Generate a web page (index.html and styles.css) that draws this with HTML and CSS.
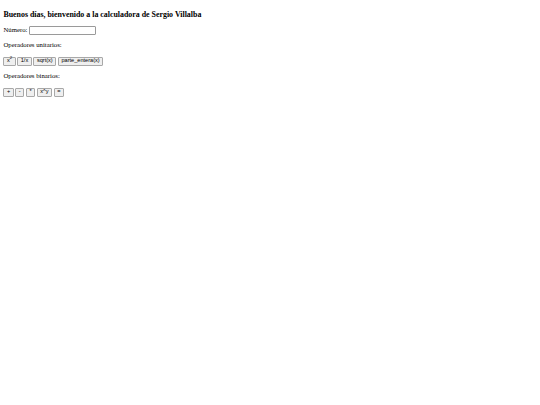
FILE: index.html
```html
<!DOCTYPE html>
<html lang="es">
<head>
<meta charset="utf-8">
<title>Calculadora</title>
<link rel="stylesheet" href="styles.css">
</head>
<body>
<h3 class="title">Buenos días, bienvenido a la calculadora de Sergio Villalba</h3>
<p class="row">Número: <input class="num" type="text"></p>
<p class="row">Operadores unitarios:</p>
<p class="row buttons"><button class="op">x<sup>2</sup></button> <button class="op">1/x</button> <button class="op">sqrt(x)</button> <button class="op">parte_entera(x)</button></p>
<p class="row">Operadores binarios:</p>
<p class="row buttons"><button class="op">+</button> <button class="op">-</button> <button class="op">*</button> <button class="op">x^y</button> <button class="op">=</button></p>
</body>
</html>
```

FILE: styles.css
```css
html, body {
  background: #ffffff;
}
body {
  margin: 3.4px;
  font-family: "Liberation Serif", "Times New Roman", serif;
  font-size: 6.75px;
  color: #000000;
  -webkit-font-smoothing: antialiased;
}
.title {
  font-size: 7.9px;
  font-weight: bold;
  margin: 6.4px 0;
}
.row {
  margin: 6.75px 0;
  line-height: normal;
}
.row.buttons {
  margin-top: 8.25px;
}
.num {
  box-sizing: border-box;
  width: 67px;
  height: 9px;
  padding: 0 1px;
  border: 1px solid #9a9a9a;
  border-radius: 1px;
  font-family: "Liberation Sans", Arial, sans-serif;
  font-size: 5.6px;
  vertical-align: middle;
  margin: 0;
}
.op {
  box-sizing: border-box;
  height: 9px;
  font-family: "Liberation Sans", Arial, sans-serif;
  font-size: 5.6px;
  padding: 0 2.5px;
  border: 1px solid #a8a8a8;
  border-radius: 1px;
  background: #efefef;
  color: #000000;
  margin: 0;
  line-height: 1;
  vertical-align: middle;
}
.op sup {
  font-size: 4.2px;
  line-height: 0;
}
```
